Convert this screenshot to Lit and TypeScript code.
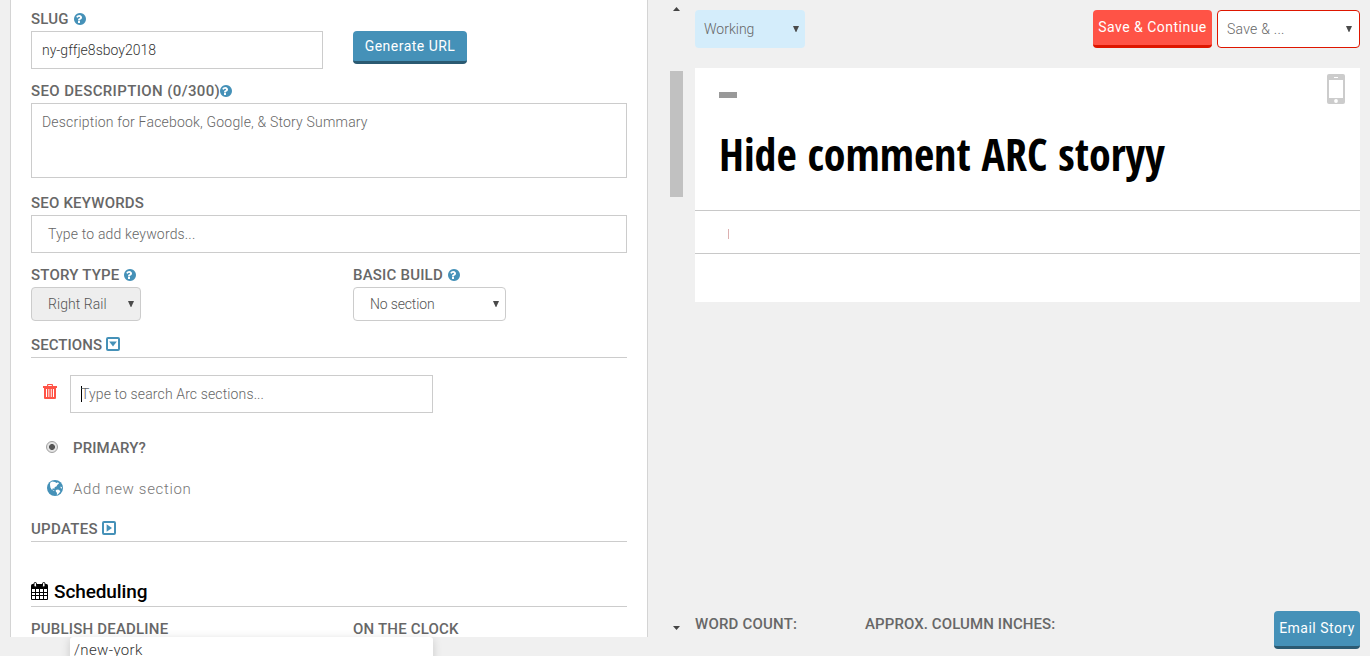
import { LitElement, html, css, svg } from "lit";
import { customElement } from "lit/decorators.js";

const help = html`<svg class="help" viewBox="128 128 1536 1536"><path d="M896 1376v-192q0-14-9-23t-23-9h-192q-14 0-23 9t-9 23v192q0 14 9 23t23 9h192q14 0 23-9t9-23zm256-672q0-88-55.500-163t-138.500-116-170-41q-243 0-371 213-15 24 8 42l132 100q7 6 19 6 16 0 25-12 53-68 86-92 34-24 86-24 48 0 85.500 26t37.500 59q0 38-20 61t-68 45q-63 28-115.500 86.500t-52.500 125.500v36q0 14 9 23t23 9h192q14 0 23-9t9-23q0-19 21.500-49.500t54.500-49.500q32-18 49-28.500t46-35 44.500-48 28-60.500 12.500-81zm512 192q0 209-103 385.500t-279.500 279.500-385.500 103-385.500-103-279.500-279.500-103-385.500 103-385.500 279.500-279.500 385.500-103 385.500 103 279.500 279.500 103 385.500z"/></svg>`;
const toggle = (open: boolean) => html`<svg class="toggle" viewBox="0 0 14 14"><rect x="1" y="1" width="12" height="12" rx="1" fill="none" stroke="#4591b8" stroke-width="2"/>${open ? svg`<path d="M3.200 4.600h7.600L7 9.600z"/>` : svg`<path d="M4.600 3.200v7.600L10 7z"/>`}</svg>`;
const trash = html`<svg class="trash" viewBox="0 0 14 15"><path fill-rule="evenodd" d="M4 2V1Q4 0 5 0h4q1 0 1 1v1h4v2h-1v10q0 1-1 1H2q-1 0-1-1V4H0V2zM5.200 2h3.600V1H5.200zM3 5v8h1V5zm2.400 0v8h.9V5zm2.400 0v8h.9V5zM10 5v8h1V5z"/></svg>`;
const globe = html`<svg class="globe" viewBox="0 0 16 16"><circle cx="8" cy="8" r="8"/><path fill="#fff" d="M3.200 2.800 5 1.500 8 2l1.500 1L11 2.200l1 1.300-1.600 1.200-1 1.800-1.600.6-.4 1.600-1.600-.4-.6 1.600L7.600 10l-.8.800-2.200-1.200-1.200-2L3 4.800zM8.800 10l2.400-.4 2.200 1.400-.8 1.600-1.800 1.800-1 .4.200-1.800-1.200-1.400zM13.600 6.400l1.400.8-.4 1.600-1-.8z"/></svg>`;
const calendar = html`<svg class="calendar" viewBox="0 0 17 18"><path d="M0 3.500Q0 2 1.500 2h14Q17 2 17 3.500V17q0 1-1 1H1q-1 0-1-1z"/><path fill="#fff" d="M1 7h3v3H1zm4 0h3v3H5zm4 0h3v3H9zm4 0h3v3h-3zM1 11h3v2H1zm4 0h3v2H5zm4 0h3v2H9zm4 0h3v2h-3zM1 14h3v3H1zm4 0h3v3H5zm4 0h3v3H9zm4 0h3v3h-3z"/><rect x="3" y=".5" width="2.500" height="4.500" rx="1.200" fill="#fff" stroke="#000"/><rect x="11.500" y=".5" width="2.500" height="4.500" rx="1.200" fill="#fff" stroke="#000"/></svg>`;
const phone = html`<svg class="phone" viewBox="0 0 18 30"><rect width="18" height="30" rx="2"/><rect x="2" y="6" width="14" height="18" fill="#fff"/><rect x="7" y="3" width="4" height="1" fill="#fff"/><circle cx="9" cy="27" r="1.900" fill="#fff"/></svg>`;
const arrow = html`<svg class="arrow" viewBox="0 0 6 6"><path d="M0 0h6L3.300 6h-.6z"/></svg>`;

@customElement("app-root")
export class AppRoot extends LitElement {
  static styles = css`
    :host { display: block; font: 400 14px/20px Roboto, "Liberation Sans", sans-serif; color: #777; }
    * { box-sizing: border-box; }
    svg { display: block; flex: none; }
    .page { width: 1370px; height: 656px; background: #f0f0f0; overflow: hidden; position: relative; display: flex; }
    .panel { width: 638px; height: 637px; margin-left: 10px; padding: 7px 20px 0; border: solid #d4d4d4; border-width: 0 1px; background: #fff; overflow: hidden; flex: none; }
    .cols { display: grid; grid-template-columns: 292px 274px; column-gap: 30px; }
    .label { height: 24px; display: flex; align-items: center; gap: 4px; font-weight: 500; color: #676767; font-size: 15px; letter-spacing: .2px; white-space: nowrap; }
    .cols .label { gap: 5px; }
    .tight { gap: 0; letter-spacing: .38px; }
    .field { height: 38px; border: 1px solid #ccc; display: flex; align-items: center; padding: 0 10px; background: #fff; white-space: nowrap; font-weight: 300; color: #666; letter-spacing: .17px; }
    .dark { color: #333; letter-spacing: 0; }
    .area { height: 75px; align-items: flex-start; padding-top: 8px; letter-spacing: .19px; }
    .wide { padding-left: 16px; }
    .select { height: 34px; border-radius: 4px; padding: 0 6px 0 16px; justify-content: space-between; font-weight: 300; color: #555; }
    .rail { width: 110px; background: #eee; letter-spacing: .05px; }
    .build { width: 153px; letter-spacing: -.15px; }
    .help { width: 12px; height: 12px; fill: #4591b8; }
    .toggle { width: 14px; height: 14px; fill: #4591b8; margin-bottom: 2px; }
    .arrow { width: 6px; height: 6px; fill: #4a4a4a; }
    .g10 { margin-top: 10px; } .g13 { margin-top: 13px; } .g12 { margin-top: 12px; letter-spacing: .06px; }
    .ruled { border-bottom: 1px solid #ccc; height: 25px; }
    .section { display: flex; align-items: center; padding-left: 12px; margin-top: 17px; }
    .trash { width: 14px; height: 15px; fill: #ff5346; margin: -5px 13px 0 0; }
    .search { width: 363px; letter-spacing: .13px; }
    .caret { width: 1px; height: 16px; background: #000; margin-right: -1px; }
    .primary { display: flex; align-items: center; height: 24px; margin-top: 23px; padding-left: 15px; gap: 15px; }
    .primary .label { letter-spacing: .1px; }
    .radio { width: 12px; height: 12px; border-radius: 50%; border: 1px solid #a0a0a0; background: radial-gradient(circle, #555 0 2.600px, #e4e4e4 3.300px); margin-top: -2px; }
    .add { display: flex; align-items: center; height: 24px; margin-top: 17px; padding-left: 16px; gap: 10px; font-size: 15px; font-weight: 300; letter-spacing: .65px; }
    .globe { width: 16px; height: 16px; fill: #4591b8; margin-top: -2px; }
    .updates { margin-top: 16px; letter-spacing: .3px; }
    .scheduling { display: flex; align-items: center; gap: 6px; height: 30px; margin-top: 35px; border-bottom: 1px solid #ccc; color: #000; font-size: 19px; font-weight: 500; letter-spacing: -.1px; }
    .calendar { width: 17px; height: 18px; margin-top: -1px; }
    .suggest { position: absolute; left: 70px; top: 637px; width: 363px; height: 40px; background: #fff; border-radius: 3px; box-shadow: 0 2px 10px rgba(0,0,0,.16); padding: 3px 4px; font-weight: 300; font-size: 15px; letter-spacing: .36px; color: #333; }
    .button { display: flex; justify-content: center; align-items: center; height: 33px; border-radius: 4px; color: #fff; background: #4591b8; border-bottom: 3px solid #2b5a72; padding-bottom: 1px; letter-spacing: .48px; white-space: nowrap; }
    .generate { width: 114px; }
    .scroll { width: 13px; margin-left: 22px; display: flex; flex-direction: column; align-items: center; flex: none; }
    .tri { width: 7px; height: 4px; fill: #444; margin-top: 7px; }
    .thumb { width: 13px; height: 126px; background: #c1c1c1; margin-top: 60px; }
    .down { margin-top: 429px; }
    .main { width: 665px; margin-left: 12px; padding-top: 10px; display: flex; flex-direction: column; }
    .bar { display: flex; height: 38px; }
    .status { width: 110px; background: #d4edfb; border: 0; padding: 0 6px 0 9px; border-radius: 4px; justify-content: space-between; letter-spacing: 0; }
    .save { width: 119px; height: 38px; background: #ff5346; border-color: #de1600; margin-left: auto; }
    .more { width: 143px; margin-left: 5px; border-color: #de1600; border-radius: 4px; justify-content: space-between; padding: 0 7px 0 9px; letter-spacing: .25px; }
    .status .arrow, .more .arrow { margin-top: -1px; }
    .story { background: #fff; height: 234px; margin-top: 20px; display: flex; flex-direction: column; }
    .head { height: 143px; border-bottom: 1px solid #c8c8c8; padding: 6px 15px 0 24px; display: grid; grid-template-columns: 1fr auto; grid-template-rows: 50px 60px; }
    .dash { width: 18px; height: 6px; background: #999; margin-top: 18px; }
    .phone { width: 18px; height: 30px; fill: #ccc; }
    .title { margin: 0; font: 700 44px/60px "Open Sans Condensed", "Open Sans", sans-serif; font-stretch: 75%; color: #000; white-space: nowrap; }
    .body { height: 43px; border-bottom: 1px solid #c8c8c8; padding: 18px 0 0 33px; }
    .mark { width: 1px; height: 10px; background: #dcb0b0; }
    .foot { display: flex; margin-top: auto; height: 45px; }
    .foot .label { margin-top: 1px; }
    .words { width: 170px; }
    .foot .inches { letter-spacing: .1px; }
    .email { width: 86px; height: 38px; margin-left: auto; }
  `;
  render() {
    return html`<div class="page">
      <div class="panel">
        <div class="cols">
          <div><div class="label"><span>SLUG</span>${help}</div><div class="field dark">ny-gffje8sboy2018</div></div>
          <div><div class="label"></div><div class="button generate">Generate URL</div></div>
        </div>
        <div class="label tight g10"><span>SEO DESCRIPTION (0/300)</span>${help}</div>
        <div class="field area">Description for Facebook, Google, &amp; Story Summary</div>
        <div class="label g13">SEO KEYWORDS</div>
        <div class="field wide">Type to add keywords...</div>
        <div class="cols g10">
          <div><div class="label"><span>STORY TYPE</span>${help}</div><div class="field select rail"><span>Right Rail</span>${arrow}</div></div>
          <div><div class="label"><span>BASIC BUILD</span>${help}</div><div class="field select build"><span>No section</span>${arrow}</div></div>
        </div>
        <div class="label ruled g12"><span>SECTIONS</span>${toggle(true)}</div>
        <div class="section">${trash}<div class="field search"><i class="caret"></i><span>Type to search Arc sections...</span></div></div>
        <div class="primary"><i class="radio"></i><div class="label">PRIMARY?</div></div>
        <div class="add">${globe}<span>Add new section</span></div>
        <div class="label ruled updates"><span>UPDATES</span>${toggle(false)}</div>
        <div class="scheduling">${calendar}<span>Scheduling</span></div>
        <div class="cols g10"><div class="label">PUBLISH DEADLINE</div><div class="label">ON THE CLOCK</div></div>
      </div>
      <div class="scroll">
        <svg class="tri" viewBox="0 0 7 4"><path d="M3.500 0 7 4H0z"/></svg>
        <div class="thumb"></div>
        <svg class="tri down" viewBox="0 0 7 4"><path d="M3.500 4 7 0H0z"/></svg>
      </div>
      <div class="main">
        <div class="bar">
          <div class="field status"><span>Working</span>${arrow}</div>
          <div class="button save">Save &amp; Continue</div>
          <div class="field more"><span>Save &amp; ...</span>${arrow}</div>
        </div>
        <div class="story">
          <div class="head"><i class="dash"></i>${phone}<h1 class="title">Hide comment ARC storyy</h1></div>
          <div class="body"><div class="mark"></div></div>
        </div>
        <div class="foot">
          <div class="label words">WORD COUNT:</div>
          <div class="label inches">APPROX. COLUMN INCHES:</div>
          <div class="button email">Email Story</div>
        </div>
      </div>
      <div class="suggest">/new-york</div>
    </div>`;
  }
}
